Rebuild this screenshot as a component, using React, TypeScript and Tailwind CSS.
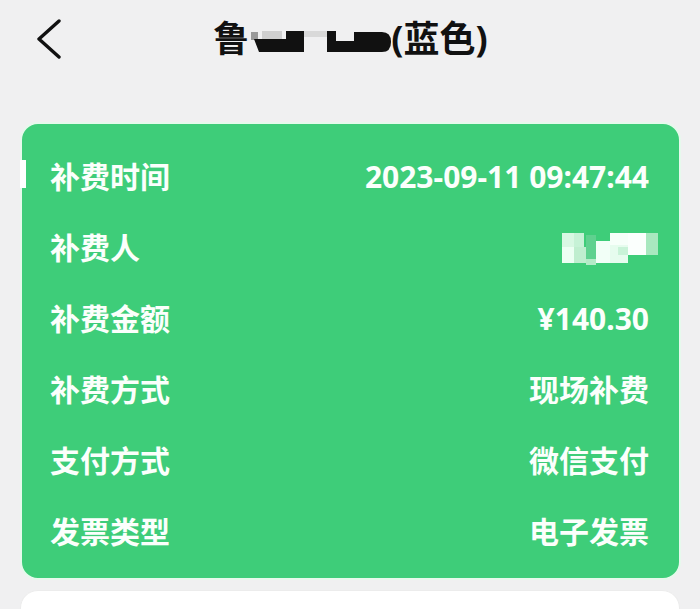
const FONT = {fontFamily: '"Noto Sans", "Noto Sans CJK SC", sans-serif'};

const ROWS: {label: string; value?: string; masked?: boolean}[] = [
  {label: '补费时间', value: '2023-09-11 09:47:44'},
  {label: '补费人', masked: true},
  {label: '补费金额', value: '¥140.30'},
  {label: '补费方式', value: '现场补费'},
  {label: '支付方式', value: '微信支付'},
  {label: '发票类型', value: '电子发票'}
];

function BackIcon() {
  return (
    <svg width="28" height="40" viewBox="0 0 28 40" className="shrink-0">
      <polyline points="24,2 4,20 24,38" fill="none" stroke="#111" strokeWidth="3.4" strokeLinecap="round" strokeLinejoin="round" />
    </svg>
  );
}

function TitleMosaic() {
  return (
    <svg width="142" height="36" viewBox="0 0 142 36" className="block shrink-0">
      <rect x="13" y="10" width="20" height="8" fill="#cfcfcf" />
      <rect x="2" y="11" width="7" height="8" fill="#9a9a9a" />
      <path d="M5 18 L37 18 L37 10 L55 10 L55 31 L10 31 Z" fill="#111" />
      <rect x="55" y="10" width="23" height="6" fill="#d9d9d9" />
      <rect x="78" y="10" width="9" height="21" fill="#111" />
      <rect x="87" y="20" width="18" height="11" fill="#111" />
      <rect x="105" y="11" width="28" height="20" fill="#111" />
      <path d="M133 11 Q142 11 142 21 Q142 31 133 31 Z" fill="#111" />
    </svg>
  );
}

function NameMosaic() {
  return (
    <svg width="96" height="34" viewBox="0 0 96 34" className="-mr-[9px]">
      <rect x="0" y="2" width="12" height="14" fill="#d8f8e3" />
      <rect x="12" y="2" width="10" height="14" fill="#c6f2d6" />
      <rect x="0" y="16" width="12" height="16" fill="#ecfff3" />
      <rect x="12" y="16" width="12" height="16" fill="#bfeecf" />
      <rect x="24" y="4" width="10" height="24" fill="#5fd18f" />
      <rect x="24" y="28" width="10" height="6" fill="#b3ebc7" />
      <rect x="34" y="10" width="14" height="22" fill="#f2fff7" />
      <rect x="48" y="14" width="18" height="18" fill="#e6fcee" />
      <rect x="48" y="2" width="18" height="12" fill="#f6fff9" />
      <rect x="56" y="16" width="10" height="8" fill="#c9f3d8" />
      <rect x="66" y="2" width="18" height="22" fill="#fbfffd" />
      <rect x="84" y="2" width="12" height="22" fill="#a8e8bf" />
    </svg>
  );
}

export default function App() {
  return (
    <div className="h-[609px] w-[700px] overflow-hidden bg-[#f0f0f1]" style={FONT}>
      <header className="flex h-[78px] items-center pl-[35px] pr-[62px]">
        <BackIcon />
        <div className="flex flex-1 items-center justify-center text-[36px] font-bold leading-none text-[#111]">
          <span>鲁</span>
          <TitleMosaic />
          <span>(蓝色)</span>
        </div>
      </header>

      <div className="relative ml-[20px] mr-[19px] mt-[44px] rounded-[18px] border-2 border-[#e6f9ec] bg-[#3ecd79] pb-[11px] pl-[28px] pr-[30px] pt-[17px]">
        <div className="absolute -left-[2px] top-[36px] h-[28px] w-[6px] bg-white" />
        {ROWS.map((row) => (
          <div key={row.label} className="flex h-[71px] items-center justify-between text-[30px] font-bold leading-none text-[#fbfffc]">
            <span>{row.label}</span>
            {row.masked ? <NameMosaic /> : <span>{row.value}</span>}
          </div>
        ))}
      </div>

      <div className="ml-[20px] mr-[20px] mt-[10px] h-[40px] rounded-t-[18px] border border-[#ececec] bg-white" />
    </div>
  );
}
